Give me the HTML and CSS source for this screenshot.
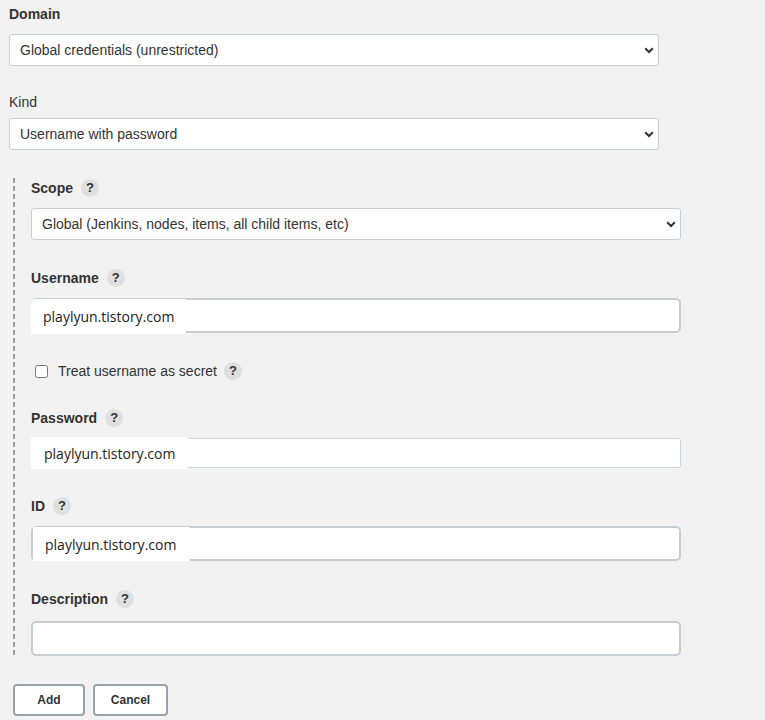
FILE: index.html
```html
<!DOCTYPE html>
<html>
<head>
<meta charset="utf-8">
<link rel="stylesheet" href="styles.css">
</head>
<body>
<div class="form">
  <div class="field domain">
    <div class="label">Domain</div>
    <div class="select-wrap">
      <select class="select"><option>Global credentials (unrestricted)</option></select>
      <svg class="chev" viewBox="0 0 10 7" width="10" height="7"><polyline points="1.2,1.2 5,5 8.8,1.2" fill="none" stroke="#333" stroke-width="2"/></svg>
    </div>
  </div>
  <div class="field kind">
    <div class="label plain">Kind</div>
    <div class="select-wrap">
      <select class="select"><option>Username with password</option></select>
      <svg class="chev" viewBox="0 0 10 7" width="10" height="7"><polyline points="1.2,1.2 5,5 8.8,1.2" fill="none" stroke="#333" stroke-width="2"/></svg>
    </div>
  </div>

  <div class="nested">
    <div class="field">
      <div class="label">Scope <span class="help">?</span></div>
      <div class="select-wrap">
        <select class="select"><option>Global (Jenkins, nodes, items, all child items, etc)</option></select>
        <svg class="chev" viewBox="0 0 10 7" width="10" height="7"><polyline points="1.2,1.2 5,5 8.8,1.2" fill="none" stroke="#333" stroke-width="2"/></svg>
      </div>
    </div>

    <div class="field">
      <div class="label">Username <span class="help">?</span></div>
      <div class="input-wrap">
        <input class="input thick" type="text">
        <span class="paste paste-user">playlyun.tistory.com</span>
      </div>
    </div>

    <div class="check-row">
      <input type="checkbox" class="check">
      <span class="check-label">Treat username as secret</span>
      <span class="help">?</span>
    </div>

    <div class="field">
      <div class="label">Password <span class="help">?</span></div>
      <div class="input-wrap">
        <input class="input thin" type="text">
        <span class="paste paste-pass">playlyun.tistory.com</span>
      </div>
    </div>

    <div class="field">
      <div class="label">ID <span class="help">?</span></div>
      <div class="input-wrap">
        <input class="input thick" type="text">
        <span class="paste paste-id">playlyun.tistory.com</span>
      </div>
    </div>

    <div class="field last">
      <div class="label desc">Description <span class="help">?</span></div>
      <div class="input-wrap">
        <input class="input thick" type="text">
      </div>
    </div>
  </div>

  <div class="buttons">
    <button class="btn btn-add">Add</button>
    <button class="btn btn-cancel">Cancel</button>
  </div>
</div>
</body>
</html>
```

FILE: styles.css
```css
html, body {
  margin: 0;
  padding: 0;
  background: #f2f2f2;
}
body {
  font-family: "Liberation Sans", Arial, sans-serif;
  font-size: 14px;
  color: #333;
}
.form {
  padding: 4px 0 0 9px;
  width: 650px;
}
.field {
  margin-bottom: 28px;
}
.field.domain { margin-bottom: 26px; }
.field.kind { margin-bottom: 28px; }
.field.last { margin-bottom: 0; }
.label {
  font-weight: bold;
  line-height: 20px;
  height: 20px;
  margin-bottom: 10px;
  display: flex;
  align-items: center;
}
.label.plain {
  font-weight: normal;
  margin-bottom: 6px;
}
.label.desc { margin-bottom: 12px; }
.help {
  display: inline-flex;
  align-items: center;
  justify-content: center;
  width: 18px;
  height: 18px;
  border-radius: 50%;
  background: #dfdfdf;
  color: #333;
  font-weight: bold;
  font-size: 13px;
  margin-left: 8px;
  line-height: 18px;
}
.select-wrap {
  position: relative;
  width: 650px;
}
.select {
  -webkit-appearance: none;
  appearance: none;
  display: block;
  box-sizing: border-box;
  width: 650px;
  height: 32px;
  border: 1px solid #c9ced2;
  border-radius: 3px;
  background: #fff;
  font-family: "Liberation Sans", Arial, sans-serif;
  font-size: 14px;
  color: #333;
  padding: 0 0 0 10px;
  margin: 0;
  outline: none;
}
.chev {
  position: absolute;
  right: 5px;
  top: 13px;
}
.nested {
  margin-left: 4px;
  padding-left: 18px;
  width: 650px;
  background-image: repeating-linear-gradient(to bottom, #9a9a9a 0, #9a9a9a 5px, transparent 5px, transparent 8px);
  background-size: 2px 100%;
  background-repeat: no-repeat;
  background-position: 0 0;
}
.input-wrap {
  position: relative;
  width: 650px;
}
.input {
  display: block;
  box-sizing: border-box;
  width: 650px;
  background: #fff;
  margin: 0;
  outline: none;
  font-size: 14px;
}
.input.thick {
  height: 35px;
  border: 2px solid #c7ced3;
  border-radius: 5px;
}
.input.thin {
  height: 30px;
  border: 1px solid #d0d5d9;
  border-radius: 3px;
}
.paste {
  position: absolute;
  background: #fff;
  font-family: "Open Sans", "Noto Sans", sans-serif;
  font-size: 14px;
  color: #222;
  display: flex;
  align-items: center;
  box-sizing: border-box;
}
.paste-user {
  left: 0;
  top: 1px;
  width: 155px;
  height: 35px;
  padding-left: 12px;
  border-radius: 4px 0 0 0;
}
.paste-pass {
  left: 0;
  top: -1px;
  width: 157px;
  height: 32px;
  padding-left: 13px;
}
.paste-id {
  left: 2px;
  top: 1px;
  width: 157px;
  height: 34px;
  padding-left: 12px;
}
.check-row {
  display: flex;
  align-items: center;
  height: 20px;
  margin-top: 1px;
  margin-bottom: 27px;
}
.check {
  width: 13px;
  height: 13px;
  margin: 0 10px 0 4px;
}
.check-label {
  line-height: 20px;
}
.check-row .help {
  margin-left: 7px;
}
.buttons {
  margin: 28px 0 0 4px;
  display: flex;
  gap: 8px;
}
.btn {
  box-sizing: border-box;
  height: 32px;
  background: #fff;
  border: 2px solid #98a2aa;
  border-radius: 4px;
  font-family: "Liberation Sans", Arial, sans-serif;
  font-weight: bold;
  font-size: 12px;
  color: #333;
  padding: 0;
  margin: 0;
}
.btn-add { width: 72px; }
.btn-cancel { width: 75px; }
```
